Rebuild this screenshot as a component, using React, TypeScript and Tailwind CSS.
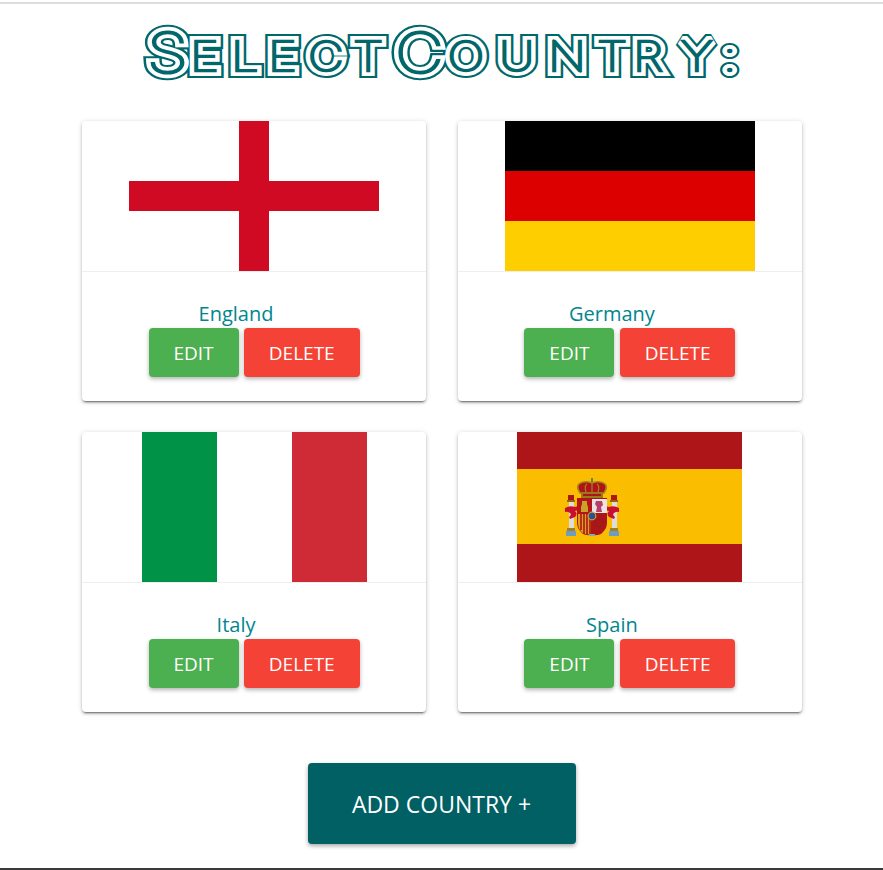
import React from 'react';

const fontStack = { fontFamily: '"Open Sans", "Noto Sans", sans-serif' };

const EnglandFlag = () => (
  <svg width="250" height="150" viewBox="0 0 250 150">
    <rect width="250" height="150" fill="#ffffff" />
    <rect x="110" width="30" height="150" fill="#cf0a22" />
    <rect y="60" width="250" height="30" fill="#cf0a22" />
  </svg>
);

const GermanyFlag = () => (
  <svg width="250" height="150" viewBox="0 0 250 150">
    <rect width="250" height="50" fill="#000000" />
    <rect y="50" width="250" height="50" fill="#dd0000" />
    <rect y="100" width="250" height="50" fill="#ffce00" />
  </svg>
);

const ItalyFlag = () => (
  <svg width="225" height="150" viewBox="0 0 225 150">
    <rect width="75" height="150" fill="#009246" />
    <rect x="75" width="75" height="150" fill="#ffffff" />
    <rect x="150" width="75" height="150" fill="#ce2b37" />
  </svg>
);

const SpainFlag = () => (
  <svg width="225" height="150" viewBox="0 0 225 150">
    <rect width="225" height="150" fill="#ad1519" />
    <rect y="37" width="225" height="75" fill="#fabd00" />
    {/* left pillar */}
    <rect x="51" y="63" width="6" height="5" fill="#ad1519" />
    <rect x="50" y="68" width="8" height="2" fill="#8a6a10" />
    <rect x="52" y="70" width="5" height="26" fill="#dcdcdc" />
    <rect x="50" y="96" width="8" height="3" fill="#a08020" />
    <rect x="49" y="99" width="10" height="5" fill="#6f9cc0" />
    {/* right pillar */}
    <rect x="94" y="63" width="6" height="5" fill="#ad1519" />
    <rect x="93" y="68" width="8" height="2" fill="#8a6a10" />
    <rect x="95" y="70" width="5" height="26" fill="#dcdcdc" />
    <rect x="93" y="96" width="8" height="3" fill="#a08020" />
    <rect x="92" y="99" width="10" height="5" fill="#6f9cc0" />
    {/* ribbons */}
    <path d="M48 76q5-3 10-1l4-1v4l-4 1q3 3 0 6l-5 2l-1-2q3-2 1-4q-3-2-5-1z" fill="#c8102e" />
    <path d="M102 76q-5-3-10-1l-4-1v4l4 1q-3 3 0 6l5 2l1-2q-3-2-1-4q3-2 5-1z" fill="#c8102e" />
    {/* crown */}
    <rect x="74" y="46" width="2" height="8" fill="#6f7a4a" />
    <path d="M63 61q-4-6-1-9q5-4 13-1q8-3 13 1q3 3-1 9z" fill="#ad1519" stroke="#a8861c" strokeWidth="1.6" />
    <path d="M69 60q-2-6 1-8M81 60q2-6-1-8M75 60v-9" stroke="#a8861c" strokeWidth="1.2" fill="none" />
    <rect x="64" y="60" width="22" height="6" fill="#9a7a18" />
    <rect x="66" y="62" width="18" height="2" fill="#ad1519" />
    {/* shield */}
    <path d="M60 66h15v37q-8 1-11-3q-4-4-4-9z" fill="#ad1519" />
    <path d="M75 66h15v25q0 5-4 9q-3 4-11 3z" fill="#ad1519" />
    <rect x="75" y="67" width="15" height="14" fill="#ebe4e4" />
    <path d="M79 69h6l1 4l-2 2l1 5h-6l1-5l-2-3z" fill="#b5406a" />
    <rect x="60" y="67" width="15" height="14" fill="#b5141a" />
    <path d="M64 80v-5l1-3v-3h5v3l1 3v5z" fill="#c9a227" />
    <path d="M61 82h13v20q-8 1-10-3q-3-3-3-8z" fill="#d8a21e" />
    <path d="M64 82v16M67 82v20M70 82v20M73 82v20" stroke="#ad1519" strokeWidth="1.6" />
    <circle cx="82" cy="91" r="4" fill="none" stroke="#8a2020" strokeWidth="1" />
    <circle cx="75" cy="84" r="3.8" fill="#2b4f9c" stroke="#c9a227" strokeWidth="1.2" />
    <rect x="72" y="102" width="6" height="2" fill="#7fb0a0" />
  </svg>
);

const titleScale = 1.2;
const xs = (...v: number[]) => v.map((x) => x / titleScale).join(' ');

// the title font is an inline multi-line face, so the text is stroked in layers
const Title = () => (
  <svg width="883" height="117" viewBox="0 1 883 117" className="block shrink-0">
    <defs>
      <text
        id="country-title"
        transform={`scale(${titleScale} 1)`}
        fontFamily="Inter, sans-serif"
        fontWeight="100"
        vectorEffect="non-scaling-stroke"
      >
        <tspan x={xs(147)} y="70" fontSize="56">S</tspan>
        <tspan x={xs(190, 231, 268, 308, 353, 380)} y="68" fontSize="41">ELECT </tspan>
        <tspan x={xs(395)} y="70" fontSize="56">C</tspan>
        <tspan x={xs(447.5, 499, 548, 597, 633, 681, 723)} y="68" fontSize="41">OUNTRY:</tspan>
      </text>
    </defs>
    <use href="#country-title" fill="#00676b" stroke="#00676b" strokeWidth="14" strokeLinejoin="miter" strokeMiterlimit="2" />
    <use href="#country-title" fill="#ffffff" stroke="#ffffff" strokeWidth="9.8" strokeLinejoin="miter" strokeMiterlimit="2" />
    <use href="#country-title" fill="#00676b" stroke="#00676b" strokeWidth="2.4" />
  </svg>
);

const countries = [
  { name: 'England', flag: <EnglandFlag /> },
  { name: 'Germany', flag: <GermanyFlag /> },
  { name: 'Italy', flag: <ItalyFlag /> },
  { name: 'Spain', flag: <SpainFlag /> },
];

const CountryCard = ({ name, flag }: { name: string; flag: React.ReactNode }) => (
  <div className="h-[280px] w-[344px] rounded bg-white shadow-[0_2px_2px_0_rgba(0,0,0,0.2),0_3px_1px_-2px_rgba(0,0,0,0.3),0_1px_5px_0_rgba(0,0,0,0.2)] overflow-hidden">
    <div className="flex h-[151px] justify-center border-b border-[#eeeeee]">{flag}</div>
    <div className="flex flex-col items-center pt-[28px]">
      <div className="h-[28px] pr-[36px] text-center text-[20px] leading-[28px] text-[#00868f]">{name}</div>
      <div className="flex gap-[5.5px]">
        <button className="h-[49px] w-[90px] rounded bg-[#4caf50] pt-px text-[19px] text-white shadow-[0_2px_4px_rgba(0,0,0,0.3)]">
          EDIT
        </button>
        <button className="h-[49px] w-[115.5px] rounded bg-[#f44336] pt-px text-[19px] text-white shadow-[0_2px_4px_rgba(0,0,0,0.3)]">
          DELETE
        </button>
      </div>
    </div>
  </div>
);

export default function App() {
  return (
    <div className="flex h-[870px] w-full flex-col items-center overflow-hidden bg-white" style={fontStack}>
      <div className="mt-[2px] h-[2px] w-full shrink-0 bg-[#dddddd]" />
      <Title />
      <div className="ml-[0.9px] grid grid-cols-[344px_344px] gap-x-[31.9px] gap-y-[31px]">
        {countries.map((c) => (
          <CountryCard key={c.name} name={c.name} flag={c.flag} />
        ))}
      </div>
      <button className="mt-[51px] h-[81px] w-[268px] shrink-0 rounded bg-[#006064] pt-px text-[23px] text-white shadow-[0_2px_4px_rgba(0,0,0,0.35)]">
        ADD COUNTRY +
      </button>
      <div className="mt-auto h-[2px] w-full shrink-0 bg-[#3a3a3a]" />
    </div>
  );
}
